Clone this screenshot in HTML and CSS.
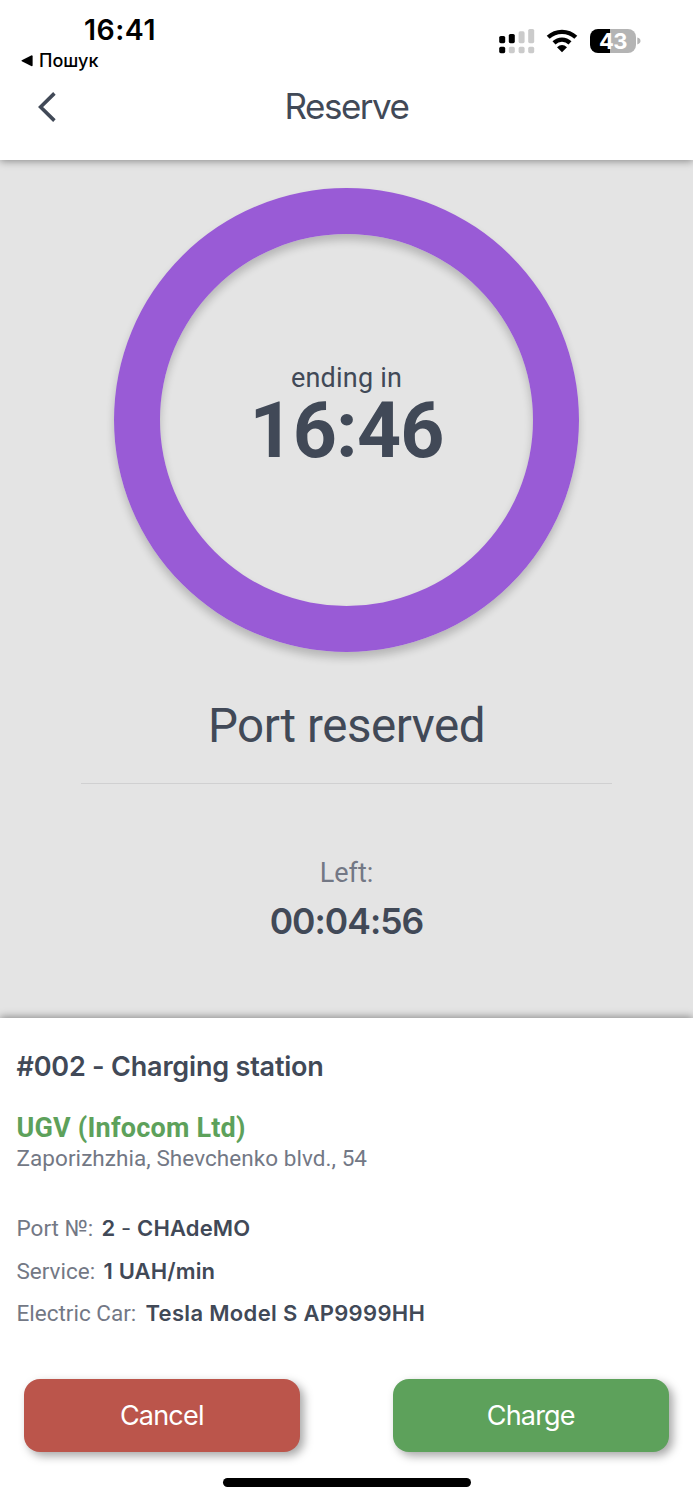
FILE: index.html
```html
<!DOCTYPE html>
<html lang="en">

<head>
    <meta charset="utf-8">
    <title>Reserve</title>
    <link rel="stylesheet" href="styles.css">
</head>

<body>
    <header class="header">
        <div class="status">
            <div class="status_left">
                <div class="clock">16:41</div>
                <div class="back_app">
                    <svg width="12" height="12" viewBox="0 0 12 12"><path d="M0.8 6.3Q0 5.8 0.8 5.2L10.2 0.4Q11.6 0 11.6 1.3V10.3Q11.6 11.6 10.2 11.1Z"/></svg>
                    <span>Пошук</span>
                </div>
            </div>
            <div class="status_right">
                <svg width="36" height="26" viewBox="0 0 36 26">
                    <g fill="#000">
                        <rect x="0.2" y="8" width="6" height="7.2" rx="1.6"/>
                        <rect x="9.8" y="6" width="6" height="9.2" rx="1.6"/>
                        <rect x="0.2" y="18.8" width="6" height="6.4" rx="1.6"/>
                    </g>
                    <g fill="#cbcbcb">
                        <rect x="19.6" y="3.3" width="6" height="11.9" rx="1.6"/>
                        <rect x="29.2" y="1" width="6" height="14.2" rx="1.6"/>
                        <rect x="9.8" y="18.8" width="6" height="6.4" rx="1.6"/>
                        <rect x="19.6" y="18.8" width="6" height="6.4" rx="1.6"/>
                        <rect x="29.2" y="18.8" width="6" height="6.4" rx="1.6"/>
                    </g>
                </svg>
                <svg class="wifi" width="32" height="24" viewBox="0 0 32 24">
                    <g fill="none" stroke="#000" stroke-width="4.3">
                        <path d="M2.2 8.3A20.2 20.2 0 0 1 29.8 8.3"/>
                        <path d="M8 13.9A11.6 11.6 0 0 1 24 13.9"/>
                    </g>
                    <path d="M16 23.2L11 18.3Q16 13.7 21 18.3Z"/>
                </svg>
                <div class="battery"><span>43</span></div>
                <svg width="4" height="8" viewBox="0 0 4 8"><path d="M0.3 0.6Q3.5 1.6 3.5 4T0.3 7.4Z" fill="#b4b4b4"/></svg>
            </div>
        </div>
        <div class="nav">
            <svg class="nav_back" width="20" height="32" viewBox="0 0 20 32"><path d="M17.4 2.4L3.6 16L17.4 29.6" fill="none" stroke="#414957" stroke-width="3.6"/></svg>
            <h1>Reserve</h1>
        </div>
    </header>

    <main class="main">
        <div class="ring">
            <div class="ending">ending in</div>
            <div class="ending_time">16:46</div>
        </div>
        <h2 class="state">Port reserved</h2>
        <div class="left_label">Left:</div>
        <div class="left_time">00:04:56</div>
    </main>

    <section class="details">
        <h3 class="station">#002 - Charging station</h3>
        <div class="owner">UGV (Infocom Ltd)</div>
        <div class="address">Zaporizhzhia, Shevchenko blvd., 54</div>
        <div class="row"><span class="label port">Port №:</span><b class="port_value">2 <i>-</i> CHAdeMO</b></div>
        <div class="row"><span class="label service">Service:</span><b class="service_value">1 UAH/min</b></div>
        <div class="row"><span class="label car">Electric Car:</span><b class="car_value">Tesla Model S AP9999HH</b></div>
        <div class="buttons">
            <button class="cancel">Cancel</button>
            <button class="charge">Charge</button>
        </div>
        <div class="home_bar"></div>
    </section>
</body>

</html>
```

FILE: styles.css
```css
* {
    box-sizing: border-box;
}

body {
    margin: 0;
    width: 693px;
    height: 1500px;
    overflow: hidden;
    background-color: #e4e4e4;
    color: #414957;
    font-family: Inter, "Liberation Sans", sans-serif;
}

h1, h2, h3 {
    margin: 0;
}

svg {
    display: block;
    flex: none;
}

.header {
    position: relative;
    height: 159.5px;
    background-color: white;
    box-shadow: 0 1px 8px rgba(0, 0, 0, 0.42);
}

.status {
    display: flex;
    justify-content: space-between;
    height: 74px;
    padding: 14px 52px 0 21px;
    color: black;
}

.clock {
    padding-left: 63px;
    font-size: 28.5px;
    font-weight: 600;
    letter-spacing: 0.5px;
    line-height: 32px;
}

.back_app {
    display: flex;
    align-items: center;
    gap: 6px;
    padding-top: 1px;
    font-size: 18px;
    font-weight: 500;
    line-height: 28px;
}

.status_right {
    display: flex;
    align-items: center;
    height: 54px;
}

.wifi {
    margin: 0 12px 0 11px;
}

.battery {
    width: 46px;
    height: 24px;
    margin-right: 1px;
    border-radius: 8px;
    background: linear-gradient(to right, black 20px, #b4b4b4 20px);
    color: white;
    font-size: 22px;
    font-weight: 700;
    letter-spacing: -0.5px;
    line-height: 25px;
    text-align: center;
}

.nav {
    display: grid;
    grid-template-columns: 100px 1fr 100px;
    align-items: center;
    height: 62px;
}

.nav_back {
    margin: 3px 0 0 37px;
}

.nav h1 {
    padding-top: 1px;
    font-size: 35px;
    font-weight: 400;
    letter-spacing: -1.5px;
    line-height: 62px;
    text-align: center;
}

.main {
    display: flex;
    flex-direction: column;
    align-items: center;
    height: 858.5px;
    padding-top: 28.5px;
    font-family: Roboto, sans-serif;
}

.ring {
    display: flex;
    flex-direction: column;
    align-items: center;
    justify-content: center;
    flex: none;
    width: 465px;
    height: 464px;
    padding-bottom: 8px;
    border: 46.5px solid #995bd6;
    border-radius: 50%;
    box-shadow: 0 6px 8px rgba(0, 0, 0, 0.2), inset 0 6px 8px rgba(0, 0, 0, 0.2);
}

.ending {
    font-size: 27px;
    letter-spacing: 0.2px;
    line-height: 30px;
}

.ending_time {
    font-size: 77px;
    font-weight: 700;
    letter-spacing: -0.9px;
    line-height: 76px;
}

.state {
    width: 531px;
    height: 131.5px;
    padding-top: 44px;
    border-bottom: 1.5px solid #d0d0d1;
    font-size: 47.5px;
    font-weight: 400;
    letter-spacing: -0.45px;
    line-height: 60px;
    text-align: center;
}

.left_label {
    margin-top: 73px;
    color: #737885;
    font-size: 27px;
    line-height: 32px;
}

.left_time {
    margin-top: 13px;
    font-family: Inter, sans-serif;
    font-size: 35.5px;
    font-weight: 600;
    letter-spacing: -1px;
    line-height: 40px;
}

.details {
    position: relative;
    height: 482px;
    padding: 32px 16.5px 0;
    background-color: white;
    box-shadow: 0 -1px 8px rgba(0, 0, 0, 0.42);
}

.station {
    font-size: 27px;
    font-weight: 600;
    letter-spacing: -0.2px;
    line-height: 34px;
}

.owner {
    margin-top: 28px;
    color: #5da15b;
    font-family: Roboto, sans-serif;
    font-size: 27px;
    font-weight: 700;
    letter-spacing: 0.2px;
    line-height: 32px;
}

.address {
    margin-bottom: 35px;
    color: #737885;
    font-family: Roboto, sans-serif;
    font-size: 22.5px;
    letter-spacing: 0.06px;
    line-height: 28px;
}

.row {
    display: flex;
    height: 42.5px;
    font-size: 22px;
    line-height: 42px;
    white-space: nowrap;
}

.label {
    flex: none;
    color: #737885;
    font-family: Roboto, sans-serif;
    font-size: 22.5px;
}

.port {
    width: 85px;
}

.service {
    width: 87px;
}

.car {
    width: 129px;
}

.row b {
    font-weight: 600;
    letter-spacing: 0.15px;
}

.row .car_value {
    letter-spacing: 0.32px;
}

.row i {
    font-style: normal;
    font-weight: 400;
}

.buttons {
    display: flex;
    justify-content: space-between;
    margin-top: 44.5px;
    padding: 0 8px 0 7.5px;
}

button {
    width: 275.5px;
    height: 73px;
    padding: 0;
    border: none;
    border-radius: 16px;
    box-shadow: 4px 4px 10px rgba(0, 0, 0, 0.35);
    color: white;
    font-family: Inter, sans-serif;
    font-size: 27px;
    font-weight: 400;
    letter-spacing: -0.8px;
}

.cancel {
    background-color: #bb554b;
}

.charge {
    background-color: #5da15b;
}

.home_bar {
    width: 248px;
    height: 8.5px;
    margin: 26px auto 0;
    border-radius: 5px;
    background-color: black;
}
```
